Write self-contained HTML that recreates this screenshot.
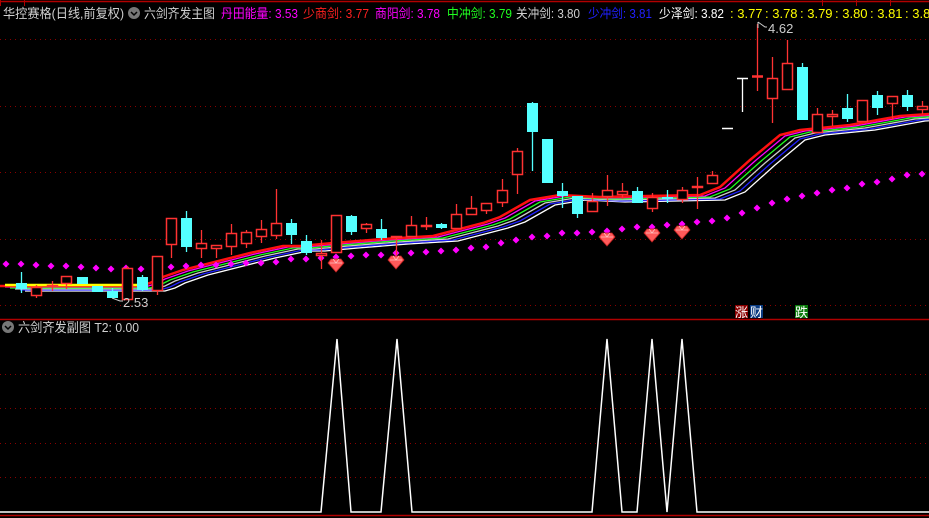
<!DOCTYPE html>
<html><head><meta charset="utf-8"><style>
html,body{margin:0;padding:0;background:#000;width:929px;height:518px;overflow:hidden}
svg{display:block}
text{font-family:"Liberation Sans","Noto Sans CJK SC",sans-serif;font-size:13px}
</style></head><body>
<svg id="s" width="929" height="518" viewBox="0 0 929 518" xmlns="http://www.w3.org/2000/svg">
<rect width="929" height="518" fill="#000"/>
<line x1="0" y1="1.5" x2="929" y2="1.5" stroke="#b00000" stroke-width="1.5"/>
<g stroke="#b00000" stroke-width="1"><line x1="0.5" y1="0" x2="0.5" y2="6"/><line x1="24.5" y1="0" x2="24.5" y2="6"/><line x1="822.5" y1="0" x2="822.5" y2="6"/><line x1="856.5" y1="0" x2="856.5" y2="6"/><line x1="890.5" y1="0" x2="890.5" y2="6"/></g>
<g stroke="#8a0000" stroke-width="1" stroke-dasharray="1,4">
<line x1="0" y1="39.5" x2="929" y2="39.5"/><line x1="0" y1="106.5" x2="929" y2="106.5"/><line x1="0" y1="172.5" x2="929" y2="172.5"/><line x1="0" y1="239.5" x2="929" y2="239.5"/><line x1="0" y1="305.5" x2="929" y2="305.5"/>
<line x1="0" y1="374.5" x2="929" y2="374.5"/><line x1="0" y1="408.5" x2="929" y2="408.5"/><line x1="0" y1="443.5" x2="929" y2="443.5"/><line x1="0" y1="477.5" x2="929" y2="477.5"/>
</g>
<line x1="0" y1="319.5" x2="929" y2="319.5" stroke="#b00000" stroke-width="1.5"/>
<line x1="0" y1="515.5" x2="929" y2="515.5" stroke="#b00000" stroke-width="1.5"/>
<g id="ma"></g>
<g id="dots" fill="#ff00ff"></g>
<g id="cd"></g>
<g id="gems"></g>
<polyline points="0,512 321,512 337,339 351,512 381,512 397,339 412,512 592,512 607,339 622,512 637,512 652,339 667,512 682,339 697,512 929,512" fill="none" stroke="#fff" stroke-width="1.5"/>
<text x="3" y="18" fill="#d0d0d0" textLength="121" lengthAdjust="spacingAndGlyphs">华控赛格(日线,前复权)</text>
<circle cx="134" cy="13" r="6" fill="#777"/><path d="M131 12 l3 3 l3 -3" stroke="#000" stroke-width="1.5" fill="none"/>
<text x="144" y="18" fill="#d0d0d0" textLength="71" lengthAdjust="spacingAndGlyphs">六剑齐发主图</text>
<text x="221" y="18" fill="#ff00ff" textLength="77" lengthAdjust="spacingAndGlyphs">丹田能量: 3.53</text>
<text x="303" y="18" fill="#ff2020" textLength="66" lengthAdjust="spacingAndGlyphs">少商剑: 3.77</text>
<text x="375" y="18" fill="#ff00ff" textLength="65" lengthAdjust="spacingAndGlyphs">商阳剑: 3.78</text>
<text x="447" y="18" fill="#20ff20" textLength="65" lengthAdjust="spacingAndGlyphs">中冲剑: 3.79</text>
<text x="516" y="18" fill="#d0d0d0" textLength="64" lengthAdjust="spacingAndGlyphs">关冲剑: 3.80</text>
<text x="588" y="18" fill="#2020ff" textLength="64" lengthAdjust="spacingAndGlyphs">少冲剑: 3.81</text>
<text x="659" y="18" fill="#ffffff" textLength="65" lengthAdjust="spacingAndGlyphs">少泽剑: 3.82</text>
<g fill="#ffff00">
<text x="730" y="18">: 3.77</text><text x="765" y="18">: 3.78</text><text x="800" y="18">: 3.79</text><text x="835" y="18">: 3.80</text><text x="870" y="18">: 3.81</text><text x="905" y="18">: 3.8</text>
</g>
<path d="M758 22 v6 M758 22 l7 5 h2" stroke="#ccc" fill="none"/><text x="768" y="33" fill="#ccc">4.62</text>
<path d="M112 298 l8 3 h3" stroke="#ccc" fill="none"/><text x="123" y="307" fill="#ccc">2.53</text>
<rect x="735" y="305" width="13" height="13" fill="#8a0000"/><text x="735" y="317" fill="#fff" font-size="12">涨</text>
<rect x="750" y="305" width="13" height="13" fill="#0a3a80"/><text x="750" y="317" fill="#fff" font-size="12">财</text>
<rect x="795" y="305" width="13" height="13" fill="#0a7a0a"/><text x="795" y="317" fill="#fff" font-size="12">跌</text>
<circle cx="8" cy="327" r="6" fill="#777"/><path d="M5 326 l3 3 l3 -3" stroke="#000" stroke-width="1.5" fill="none"/>
<text x="18" y="332" fill="#d0d0d0" textLength="121" lengthAdjust="spacingAndGlyphs">六剑齐发副图  T2: 0.00</text>
</svg>
<script>
var NS="http://www.w3.org/2000/svg";
function el(p,t,a){var e=document.createElementNS(NS,t);for(var k in a)e.setAttribute(k,a[k]);document.getElementById(p).appendChild(e);return e;}
var red=[[0,286],[140,286],[150,283],[160,278],[183,270],[250,253],[283,246],[300,246],[333,243],[383,239],[433,236],[483,223],[500,217],[530,200],[560,195],[600,197],[700,195],[720,187],[750,160],[780,135],[800,130],[850,125],[900,116],[929,114]];
function shift(dx,dy){return red.map(function(p){return (p[0]+dx)+","+(p[1]+dy)}).concat([(929)+","+(114+dy)]).join(" ");}
var cols=[["#ffffff",25,5],["#2020ff",20,4],["#cccccc",15,3],["#20ff20",10,2],["#ff00ff",5,1]];
cols.forEach(function(c){el("ma","polyline",{points:shift(c[1],c[2]),fill:"none",stroke:c[0],"stroke-width":1.3});});
el("ma","polyline",{points:shift(0,0),fill:"none",stroke:"#ff1010","stroke-width":2.5});
el("ma","line",{x1:5,y1:285,x2:140,y2:285,stroke:"#ffff00","stroke-width":2.5});
var dp=[[6,264],[21,264],[36,265],[51,266],[66,266],[81,267],[96,268],[111,269],[126,268],[141,269],[156,268],[171,267],[186,266],[201,265],[216,265],[231,264],[246,263],[261,263],[276,262],[291,259],[306,259],[321,258],[336,257],[351,256],[366,255],[381,255],[396,253],[411,253],[426,252],[441,251],[456,250],[471,248],[486,247],[501,243],[516,240],[532,237],[547,236],[562,233],[577,233],[592,232],[607,231],[622,229],[637,227],[652,227],[667,225],[682,224],[697,222],[712,221],[727,218],[742,213],[757,208],[772,203],[787,199],[802,196],[817,193],[832,190],[847,188],[862,184],[877,182],[892,179],[907,175],[922,174]];
dp.forEach(function(p){el("dots","path",{d:"M"+p[0]+" "+(p[1]-3.5)+" l3.5 3.5 l-3.5 3.5 l-3.5 -3.5z"});});
var C=[[21,283,289,272,293,"c"],[36,287,296,285,298,"r"],[52,285,287,281,291,"r"],[66,276,284,276,289,"r"],[82,277,284,277,284,"c"],[97,286,292,286,292,"c"],[112,291,298,288,298,"c"],[127,268,300,266,300,"r"],[142,277,290,275,291,"c"],[157,256,291,256,295,"r"],[171,218,245,218,258,"r"],[186,218,247,211,252,"c"],[201,243,249,230,258,"r"],[216,245,249,245,258,"r"],[231,233,247,224,255,"r"],[246,232,244,230,248,"r"],[261,229,237,220,243,"r"],[276,223,236,189,239,"r"],[291,223,235,219,244,"c"],[306,241,253,235,255,"c"],[321,253,256,240,269,"r"],[336,215,253,215,253,"r"],[351,216,232,215,235,"c"],[366,224,229,223,233,"r"],[381,229,238,219,240,"c"],[396,236,238,236,255,"r"],[411,225,237,216,237,"r"],[426,225,227,217,230,"r"],[441,224,228,223,229,"c"],[456,214,229,204,229,"r"],[471,208,215,196,215,"r"],[486,203,211,203,214,"r"],[502,190,203,179,207,"r"],[517,151,175,148,194,"r"],[532,103,132,102,171,"c"],[547,139,183,139,183,"c"],[562,191,196,183,208,"c"],[577,196,214,196,218,"c"],[592,201,212,193,212,"r"],[607,190,197,175,206,"r"],[622,191,195,183,199,"r"],[637,191,203,187,203,"c"],[652,197,209,193,212,"r"],[667,197,199,190,203,"c"],[682,190,200,187,203,"r"],[697,186,188,177,209,"r"],[712,175,184,171,184,"r"],[727,128,128,128,128,"w"],[742,78,78,78,112,"w"],[757,76,76,24,91,"d"],[772,78,99,57,123,"r"],[787,63,90,40,90,"r"],[802,67,120,63,120,"c"],[817,114,133,108,133,"r"],[832,114,117,110,126,"r"],[847,108,119,94,122,"c"],[862,100,122,100,122,"r"],[877,95,108,91,115,"c"],[892,96,104,96,120,"r"],[907,95,107,90,111,"c"],[922,106,110,101,114,"r"]];
C.forEach(function(c){var x=c[0],t=c[1],b=c[2],col=c[5]=="c"?"#54ffff":(c[5]=="w"?"#ffffff":"#ff3232");
 el("cd","line",{x1:x+0.5,y1:c[3],x2:x+0.5,y2:c[4],stroke:col,"stroke-width":1.3});
 if(c[5]=="c"){el("cd","rect",{x:x-5,y:t,width:11,height:Math.max(b-t,1.5),fill:col});}
 else if(c[5]=="w"||c[5]=="d"||b-t<2){el("cd","line",{x1:x-5,y1:t+0.5,x2:x+6,y2:t+0.5,stroke:col,"stroke-width":c[5]=="d"?2.5:1.5});}
 else{el("cd","rect",{x:x-4.5,y:t+0.5,width:10,height:b-t-1,fill:"#000",stroke:col,"stroke-width":1.5});}
});
[[336,265],[396,262],[607,239],[652,235],[682,232]].forEach(function(g){var x=g[0],y=g[1];
 el("gems","path",{d:"M"+(x-8)+" "+(y-2)+" l3 -4 h10 l3 4 l-8 9z",fill:"#ff5a5a",stroke:"#c02020","stroke-width":0.8});
 el("gems","path",{d:"M"+(x-6)+" "+(y-2)+" h12 M"+(x-3)+" "+(y-6)+" l3 4 l3 -4",fill:"none",stroke:"#ffc0c0","stroke-width":0.8});
});
</script>
</body></html>
